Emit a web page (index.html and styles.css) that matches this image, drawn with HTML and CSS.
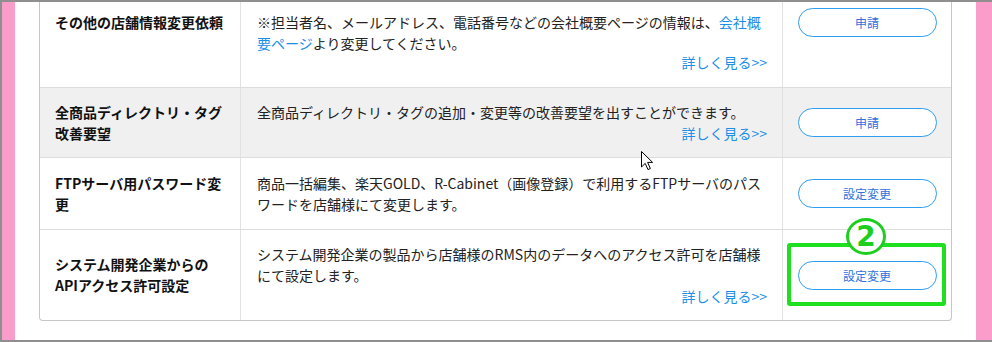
FILE: index.html
```html
<!DOCTYPE html>
<html lang="ja">
<head>
<meta charset="utf-8">
<link rel="stylesheet" href="styles.css">
</head>
<body>
<div class="frame">
  <div class="pink pink-left"></div>
  <div class="page">
    <div class="card">
      <div class="row row-cut">
        <div class="cell name">その他の店舗情報変更依頼</div>
        <div class="cell desc">
          <p>※担当者名、メールアドレス、電話番号などの会社概要ページの情報は、<a class="link" href="#">会社概</a><a class="link" href="#">要ページ</a>より変更してください。</p>
          <a class="more" href="#">詳しく見る&gt;&gt;</a>
        </div>
        <div class="cell action"><button class="btn">申請</button></div>
      </div>
      <div class="row row-gray">
        <div class="cell name">全商品ディレクトリ・タグ改善要望</div>
        <div class="cell desc">
          <p>全商品ディレクトリ・タグの追加・変更等の改善要望を出すことができます。</p>
          <a class="more" href="#">詳しく見る&gt;&gt;</a>
        </div>
        <div class="cell action"><button class="btn">申請</button></div>
      </div>
      <div class="row row-ftp">
        <div class="cell name">FTPサーバ用パスワード変更</div>
        <div class="cell desc">
          <p>商品一括編集、楽天GOLD、R-Cabinet（画像登録）で利用するFTPサーバのパスワードを店舗様にて変更します。</p>
        </div>
        <div class="cell action"><button class="btn">設定変更</button></div>
      </div>
      <div class="row row-last">
        <div class="cell name">システム開発企業からの<br>APIアクセス許可設定</div>
        <div class="cell desc">
          <p>システム開発企業の製品から店舗様のRMS内のデータへのアクセス許可を店舗様にて設定します。</p>
          <a class="more" href="#">詳しく見る&gt;&gt;</a>
        </div>
        <div class="cell action"><button class="btn">設定変更</button></div>
      </div>
    </div>
  </div>
  <div class="pink pink-right"></div>

  <div class="mark-box"></div>
  <div class="mark-num">2</div>
  <svg class="cursor" width="13" height="20" viewBox="0 0 13 20">
    <path d="M0.5 0.5 L0.5 16 L4.2 12.4 L7 18.6 L9.4 17.5 L6.6 11.4 L11.6 11.4 Z" fill="#fff" stroke="#000" stroke-width="1" stroke-linejoin="miter"/>
  </svg>
</div>
</body>
</html>
```

FILE: styles.css
```css
* { box-sizing: border-box; }

html, body {
  margin: 0;
  padding: 0;
  background: #fff;
}

body {
  font-family: "Noto Sans CJK JP", "Noto Sans", sans-serif;
  color: #222;
}

.frame {
  position: relative;
  width: 992px;
  height: 342px;
  border-top: 2px solid #8f8f8f;
  border-left: 2px solid #8f8f8f;
  border-bottom: 2px solid #8f8f8f;
  display: flex;
  overflow: hidden;
  background: #fff;
}

.pink {
  background: #fa9dcb;
  flex: none;
}
.pink-left { width: 13px; }
.pink-right { width: 16px; }

.page {
  flex: 1;
  padding: 0 24px;
}

.card {
  border: 1px solid #c6c6c6;
  border-top: none;
  border-radius: 0 0 4px 4px;
  background: #fff;
  overflow: hidden;
}

.row {
  display: grid;
  grid-template-columns: 201px 542px 1fr;
  border-bottom: 1px solid #dddddd;
  align-items: stretch;
}
.row-last { border-bottom: none; }
.row-gray { background: #f0f0f0; }

.cell {
  display: flex;
  flex-direction: column;
  justify-content: center;
  font-size: 14px;
  line-height: 21px;
}

.name {
  border-right: 1px solid #e2e2e2;
  padding: 0 15px 0 15px;
  font-weight: bold;
  color: #111;
}

.desc {
  border-right: 1px solid #e2e2e2;
  padding: 14px 15px 14px 16px;
  color: #222;
}

.row-ftp .desc { padding-top: 15px; }

.desc p {
  margin: 0;
}

.link {
  color: #1a8fe8;
  text-decoration: none;
}

.more {
  align-self: flex-end;
  color: #1a8fe8;
  text-decoration: none;
  line-height: 20px;
}

.action {
  align-items: center;
}

.btn {
  width: 139px;
  height: 29px;
  border: 1px solid #2d9df2;
  border-radius: 15px;
  background: #fff;
  color: #2f72dc;
  font-family: "Noto Sans CJK JP", "Noto Sans", sans-serif;
  font-size: 12px;
  padding: 0;
  line-height: 27px;
}

/* first row is scrolled partly out of view */
.row-cut .cell { justify-content: flex-start; }
.row-cut .name { padding-top: 10px; }
.row-cut .desc { padding: 10px 15px 15px 16px; }
.row-cut .more { margin-top: -2px; }
.row-cut .action { padding-top: 6px; }

/* annotations laid over the screenshot */
.mark-box {
  position: absolute;
  left: 785px;
  top: 241px;
  width: 159px;
  height: 63px;
  border: 4px solid #1fe01f;
  border-radius: 3px;
}

.mark-num {
  position: absolute;
  left: 844px;
  top: 216px;
  width: 40px;
  height: 37px;
  border: 3px solid #1ccf1c;
  border-radius: 50%;
  background: #fff;
  color: #1ccf1c;
  font-family: "DejaVu Sans", sans-serif;
  font-weight: bold;
  font-size: 28px;
  line-height: 31px;
  text-align: center;
}

.cursor {
  position: absolute;
  left: 639px;
  top: 149px;
}
```
